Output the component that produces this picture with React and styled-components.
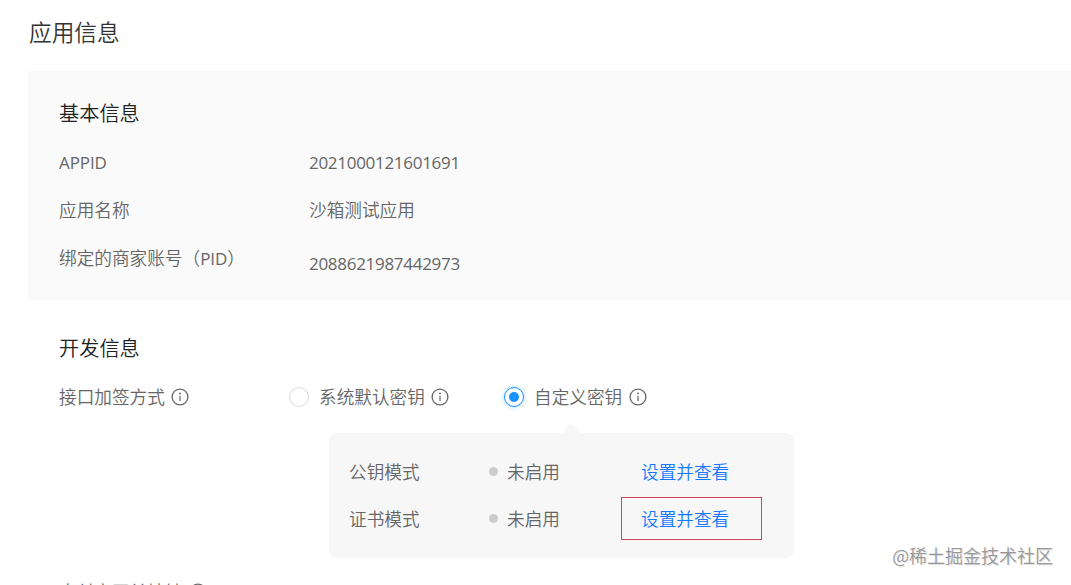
import React from "react";
import styled, { createGlobalStyle } from "styled-components";

const basicRows = [
  { label: "APPID", value: "2021000121601691", latin: true },
  { label: "应用名称", value: "沙箱测试应用" },
  {
    label: (
      <>
        绑定的商家账号（<Latin>PID</Latin>）
      </>
    ),
    value: "2088621987442973",
    latin: true,
    drop: true,
  },
];

const modes = [
  { name: "公钥模式", status: "未启用" },
  { name: "证书模式", status: "未启用", marked: true },
];

function Latin({ children, digits }) {
  return <LatinText $digits={digits}>{children}</LatinText>;
}

const InfoIcon = () => (
  <IconSvg viewBox="0 0 18 18" fill="none">
    <circle cx="9" cy="9" r="7.9" stroke="currentColor" strokeWidth="1.3" />
    <circle cx="9" cy="5.4" r="0.95" fill="currentColor" />
    <path d="M9 7.7V13" stroke="currentColor" strokeWidth="1.2" />
  </IconSvg>
);

const App = () => {
  return (
    <Page>
      <GlobalStyle />
      <Title>应用信息</Title>

      {/* Basic info */}
      <BasicPanel>
        <SectionTitle>基本信息</SectionTitle>
        {basicRows.map((row) => (
          <Row key={row.value}>
            <Label $drop={row.drop}>
              {row.label === "APPID" ? <Latin>APPID</Latin> : row.label}
            </Label>
            <Value $drop={row.drop}>
              {row.latin ? <Latin digits>{row.value}</Latin> : row.value}
            </Value>
          </Row>
        ))}
      </BasicPanel>

      {/* Developer info */}
      <DevSection>
        <SectionTitle>开发信息</SectionTitle>
        <Row>
          <SignLabel>
            接口加签方式
            <InfoIcon />
          </SignLabel>
          <Option $width={215}>
            <Radio />
            系统默认密钥
            <InfoIcon />
          </Option>
          <Option>
            <Radio $checked />
            自定义密钥
            <InfoIcon />
          </Option>
        </Row>

        <ModePanel>
          <Arrow />
          {modes.map((mode) => (
            <ModeRow key={mode.name}>
              <ModeName>{mode.name}</ModeName>
              <Status>{mode.status}</Status>
              <Action $marked={mode.marked}>设置并查看</Action>
            </ModeRow>
          ))}
        </ModePanel>

        <GatewayRow>
          支付宝网关地址
          <InfoIcon />
        </GatewayRow>
      </DevSection>

      <Watermark>@稀土掘金技术社区</Watermark>
    </Page>
  );
};

const GlobalStyle = createGlobalStyle`
  * {
    box-sizing: border-box;
  }
  body {
    margin: 0;
    overflow: hidden;
    background: #fff;
  }
`;

const Page = styled.div`
  position: relative;
  width: 100%;
  height: 585px;
  padding: 14px 0 0 28px;
  overflow: hidden;
  color: #666;
  font-family: "Noto Sans CJK SC", sans-serif;
  font-size: 17.65px;
  font-weight: 350;
  line-height: 24px;
  white-space: nowrap;
`;

const LatinText = styled.span`
  font-family: "Open Sans", "Noto Sans", sans-serif;
  font-size: 17px;
  font-weight: 400;
  letter-spacing: ${(props) => (props.$digits ? "-0.29px" : "-0.1px")};
  line-height: 1;
`;

const Title = styled.h1`
  height: 36px;
  margin: 0 0 21px 1px;
  color: #333;
  font-size: 22.7px;
  font-weight: inherit;
  line-height: 36px;
`;

const BasicPanel = styled.section`
  height: 229px;
  padding: 28px 0 0 31px;
  background: #fafafa;
`;

const SectionTitle = styled.h2`
  height: 28px;
  margin: 0 0 13px;
  color: #222;
  font-size: 20.2px;
  font-weight: inherit;
  line-height: 28px;
`;

const Row = styled.div`
  display: flex;
  align-items: flex-start;
  height: 47.5px;
  padding-top: 10px;
`;

const Label = styled.div`
  width: 250px;
  padding-top: ${(props) => (props.$drop ? "1px" : "0")};
`;

const Value = styled.div`
  padding-top: ${(props) => (props.$drop ? "6px" : "0")};
`;

const DevSection = styled.section`
  padding: 34px 0 0 31px;
`;

const SignLabel = styled.div`
  display: flex;
  align-items: center;
  width: 230px;
`;

const Option = styled.div`
  display: flex;
  align-items: center;
  width: ${(props) => (props.$width ? `${props.$width}px` : "auto")};
`;

const Radio = styled.span`
  display: flex;
  align-items: center;
  justify-content: center;
  width: 20px;
  height: 20px;
  margin-right: 10px;
  border: 1px solid ${(props) => (props.$checked ? "#1890ff" : "#d9d9d9")};
  border-radius: 50%;
  background: #fff;
  box-shadow: ${(props) => (props.$checked ? "0 0 3px 2px #dcf1ff" : "none")};
  &::after {
    content: "";
    width: 10px;
    height: 10px;
    border-radius: 50%;
    background: ${(props) => (props.$checked ? "#1890ff" : "transparent")};
  }
`;

const IconSvg = styled.svg`
  flex: none;
  width: 18px;
  height: 18px;
  margin-left: 6.6px;
`;

const ModePanel = styled.div`
  position: relative;
  width: 465px;
  height: 125px;
  margin: 10.5px 0 0 270px;
  padding: 14.5px 20px;
  border-radius: 8px;
  background: #f7f7f7;
`;

const Arrow = styled.span`
  position: absolute;
  top: -7px;
  left: 235px;
  width: 15px;
  height: 15px;
  border-radius: 4px;
  background: #f7f7f7;
  transform: rotate(45deg);
`;

const ModeRow = styled.div`
  display: flex;
  align-items: center;
  height: 47px;
`;

const ModeName = styled.div`
  width: 140px;
  padding-top: 1px;
`;

const Status = styled.div`
  display: flex;
  align-items: center;
  width: 132px;
  padding-top: 1px;
  &::before {
    content: "";
    width: 9px;
    height: 9px;
    margin-right: 9px;
    border-radius: 50%;
    background: #ccc;
  }
`;

const Action = styled.a`
  width: 141px;
  height: 43px;
  padding-left: 19px;
  border: 1px solid ${(props) => (props.$marked ? "#d0485c" : "transparent")};
  color: #1677ff;
  line-height: 41px;
`;

const GatewayRow = styled.div`
  display: flex;
  align-items: center;
  height: 24px;
  margin-top: 22px;
`;

const Watermark = styled.div`
  position: absolute;
  right: 18px;
  bottom: 18px;
  color: #999;
  font-size: 18px;
  text-shadow: 1px 1px 1px rgba(0, 0, 0, 0.15);
`;

export default App;
